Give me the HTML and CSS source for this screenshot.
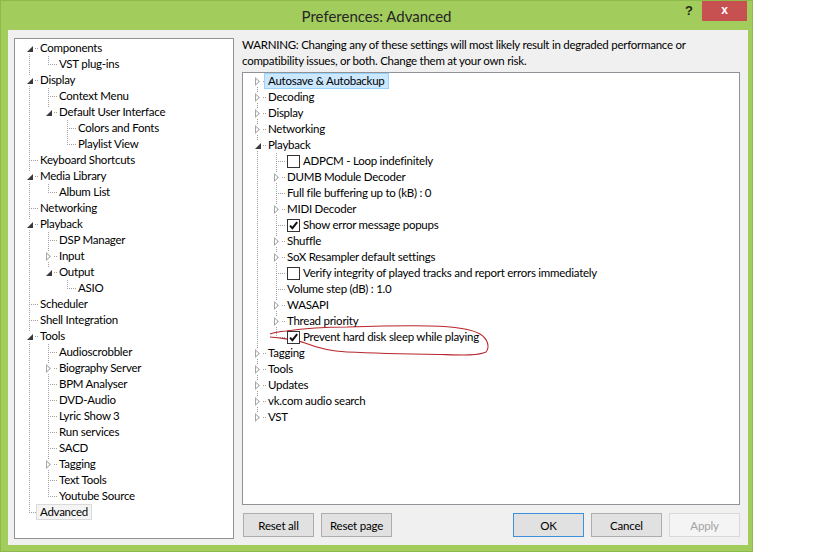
FILE: index.html
```html
<!DOCTYPE html>
<html>
<head>
<meta charset="utf-8">
<title>Preferences: Advanced</title>
<link rel="stylesheet" href="styles.css">
</head>
<body>
<div class="win">
  <div class="titlebar">
    <span></span>
    <span class="title">Preferences: Advanced</span>
    <span class="ctrls"><span class="help">?</span><span class="close">x</span></span>
  </div>
  <div class="client">
    <div class="tree tleft">
      <div class="row"><i class="c first"><b class="ex open"></b></i><span class="lb">Components</span></div>
      <div class="row"><i class="c pipe"></i><i class="c elbow"></i><span class="lb">VST plug-ins</span></div>
      <div class="row"><i class="c tee"><b class="ex open"></b></i><span class="lb">Display</span></div>
      <div class="row"><i class="c pipe"></i><i class="c tee"></i><span class="lb">Context Menu</span></div>
      <div class="row"><i class="c pipe"></i><i class="c elbow"><b class="ex open"></b></i><span class="lb">Default User Interface</span></div>
      <div class="row"><i class="c pipe"></i><i class="c"></i><i class="c tee"></i><span class="lb">Colors and Fonts</span></div>
      <div class="row"><i class="c pipe"></i><i class="c"></i><i class="c elbow"></i><span class="lb">Playlist View</span></div>
      <div class="row"><i class="c tee"></i><span class="lb">Keyboard Shortcuts</span></div>
      <div class="row"><i class="c tee"><b class="ex open"></b></i><span class="lb">Media Library</span></div>
      <div class="row"><i class="c pipe"></i><i class="c elbow"></i><span class="lb">Album List</span></div>
      <div class="row"><i class="c tee"></i><span class="lb">Networking</span></div>
      <div class="row"><i class="c tee"><b class="ex open"></b></i><span class="lb">Playback</span></div>
      <div class="row"><i class="c pipe"></i><i class="c tee"></i><span class="lb">DSP Manager</span></div>
      <div class="row"><i class="c pipe"></i><i class="c tee"><b class="ex closed"></b></i><span class="lb">Input</span></div>
      <div class="row"><i class="c pipe"></i><i class="c elbow"><b class="ex open"></b></i><span class="lb">Output</span></div>
      <div class="row"><i class="c pipe"></i><i class="c"></i><i class="c elbow"></i><span class="lb">ASIO</span></div>
      <div class="row"><i class="c tee"></i><span class="lb">Scheduler</span></div>
      <div class="row"><i class="c tee"></i><span class="lb">Shell Integration</span></div>
      <div class="row"><i class="c tee"><b class="ex open"></b></i><span class="lb">Tools</span></div>
      <div class="row"><i class="c pipe"></i><i class="c tee"></i><span class="lb">Audioscrobbler</span></div>
      <div class="row"><i class="c pipe"></i><i class="c tee"><b class="ex closed"></b></i><span class="lb">Biography Server</span></div>
      <div class="row"><i class="c pipe"></i><i class="c tee"></i><span class="lb">BPM Analyser</span></div>
      <div class="row"><i class="c pipe"></i><i class="c tee"></i><span class="lb">DVD-Audio</span></div>
      <div class="row"><i class="c pipe"></i><i class="c tee"></i><span class="lb">Lyric Show 3</span></div>
      <div class="row"><i class="c pipe"></i><i class="c tee"></i><span class="lb">Run services</span></div>
      <div class="row"><i class="c pipe"></i><i class="c tee"></i><span class="lb">SACD</span></div>
      <div class="row"><i class="c pipe"></i><i class="c tee"><b class="ex closed"></b></i><span class="lb">Tagging</span></div>
      <div class="row"><i class="c pipe"></i><i class="c tee"></i><span class="lb">Text Tools</span></div>
      <div class="row"><i class="c pipe"></i><i class="c elbow"></i><span class="lb">Youtube Source</span></div>
      <div class="row"><i class="c elbow"></i><span class="lb sel-gray">Advanced</span></div>
    </div>
    <div class="main">
      <p class="warn">WARNING: Changing any of these settings will most likely result in degraded performance or compatibility issues, or both. Change them at your own risk.</p>
      <div class="tree tright">
        <div class="row"><i class="c first"><b class="ex closed"></b></i><span class="lb sel-blue">Autosave &amp; Autobackup</span></div>
        <div class="row"><i class="c tee"><b class="ex closed"></b></i><span class="lb">Decoding</span></div>
        <div class="row"><i class="c tee"><b class="ex closed"></b></i><span class="lb">Display</span></div>
        <div class="row"><i class="c tee"><b class="ex closed"></b></i><span class="lb">Networking</span></div>
        <div class="row"><i class="c tee"><b class="ex open"></b></i><span class="lb">Playback</span></div>
        <div class="row"><i class="c pipe"></i><i class="c tee"></i><span class="lb"><span class="cb"></span>ADPCM - Loop indefinitely</span></div>
        <div class="row"><i class="c pipe"></i><i class="c tee"><b class="ex closed"></b></i><span class="lb">DUMB Module Decoder</span></div>
        <div class="row"><i class="c pipe"></i><i class="c tee"></i><span class="lb">Full file buffering up to (kB) : 0</span></div>
        <div class="row"><i class="c pipe"></i><i class="c tee"><b class="ex closed"></b></i><span class="lb">MIDI Decoder</span></div>
        <div class="row"><i class="c pipe"></i><i class="c tee"></i><span class="lb"><span class="cb"><svg viewBox="0 0 11 11" width="11" height="11"><path d="M2 5.6 L4.4 8.2 L9.2 2.2" fill="none" stroke="#111" stroke-width="2"/></svg></span>Show error message popups</span></div>
        <div class="row"><i class="c pipe"></i><i class="c tee"><b class="ex closed"></b></i><span class="lb">Shuffle</span></div>
        <div class="row"><i class="c pipe"></i><i class="c tee"><b class="ex closed"></b></i><span class="lb">SoX Resampler default settings</span></div>
        <div class="row"><i class="c pipe"></i><i class="c tee"></i><span class="lb"><span class="cb"></span>Verify integrity of played tracks and report errors immediately</span></div>
        <div class="row"><i class="c pipe"></i><i class="c tee"></i><span class="lb">Volume step (dB) : 1.0</span></div>
        <div class="row"><i class="c pipe"></i><i class="c tee"><b class="ex closed"></b></i><span class="lb">WASAPI</span></div>
        <div class="row"><i class="c pipe"></i><i class="c tee"><b class="ex closed"></b></i><span class="lb">Thread priority</span></div>
        <div class="row"><i class="c pipe"></i><i class="c elbow"></i><span class="lb"><span class="cb"><svg viewBox="0 0 11 11" width="11" height="11"><path d="M2 5.6 L4.4 8.2 L9.2 2.2" fill="none" stroke="#111" stroke-width="2"/></svg></span>Prevent hard disk sleep while playing</span></div>
        <div class="row"><i class="c tee"><b class="ex closed"></b></i><span class="lb">Tagging</span></div>
        <div class="row"><i class="c tee"><b class="ex closed"></b></i><span class="lb">Tools</span></div>
        <div class="row"><i class="c tee"><b class="ex closed"></b></i><span class="lb">Updates</span></div>
        <div class="row"><i class="c tee"><b class="ex closed"></b></i><span class="lb">vk.com audio search</span></div>
        <div class="row"><i class="c elbow"><b class="ex closed"></b></i><span class="lb">VST</span></div>
      </div>
      <div class="buttons">
        <div class="btn-group">
          <button class="btn">Reset all</button>
          <button class="btn">Reset page</button>
        </div>
        <div class="btn-group">
          <button class="btn default">OK</button>
          <button class="btn">Cancel</button>
          <button class="btn disabled">Apply</button>
        </div>
      </div>
    </div>
  </div>
</div>
<svg class="scribble" width="819" height="553" viewBox="0 0 819 553">
  <path d="M270,334 C276,332 281,331.5 286,331 C300,329 320,327 347,327 C380,326 410,325.5 430,326 C450,326.5 470,328 480,334 C488,339 490,347 486,352 C478,356 460,355 440,354.5 C410,354 380,353.5 347,352 C330,351 315,347 305,343 C296,340 287,339 280,338 L270,337" fill="none" stroke="#b8262b" stroke-width="1.1"/>
</svg>
</body>
</html>
```

FILE: styles.css
```css
html, body {
  margin: 0;
  padding: 0;
  background: #ffffff;
}
body {
  width: 819px;
  height: 553px;
  position: relative;
  overflow: hidden;
  font-family: Lato, "Liberation Sans", sans-serif;
  font-size: 11.5px;
  letter-spacing: -0.25px;
  color: #000;
}
.win {
  width: 753px;
  height: 552px;
  box-sizing: border-box;
  background: #a2cc5c;
  border: 1px solid #8dba4a;
  display: flex;
  flex-direction: column;
}
.titlebar {
  height: 29px;
  display: grid;
  grid-template-columns: 1fr auto 1fr;
  align-items: start;
}
.title {
  font-size: 15px;
  letter-spacing: 0;
  color: #262626;
  line-height: 29px;
  padding-top: 1px;
}
.ctrls {
  justify-self: end;
  display: flex;
  margin-right: 5px;
}
.help {
  width: 26px;
  height: 20px;
  text-align: center;
  font-family: "Liberation Sans", sans-serif;
  font-weight: bold;
  font-size: 13px;
  letter-spacing: 0;
  line-height: 20px;
  color: #1f2a14;
}
.close {
  width: 45px;
  height: 20px;
  background: #c75050;
  color: #fff;
  text-align: center;
  font-family: "Liberation Sans", sans-serif;
  font-weight: bold;
  font-size: 12px;
  letter-spacing: 0;
  line-height: 19px;
}
.client {
  flex: 1;
  margin: 0 4px 6px 7px;
  background: #f0f0f0;
  padding: 8px 8px 6px 6px;
  display: grid;
  grid-template-columns: 220px 1fr;
  column-gap: 8px;
  min-height: 0;
}
.tree {
  background: #fff;
  border: 1px solid #8f9296;
  box-sizing: border-box;
  overflow: hidden;
}
.tleft {
  padding: 1px 0 0 6px;
}
.tright {
  padding: 0 0 0 6px;
  flex: 1;
}
.main {
  display: flex;
  flex-direction: column;
  min-height: 0;
  padding-bottom: 2px;
}
.warn {
  margin: -1px 0 3px;
  line-height: 16px;
}
.row {
  display: flex;
  align-items: center;
  height: 16px;
  white-space: nowrap;
}
.c {
  position: relative;
  flex: none;
  width: 19px;
  height: 16px;
}
.c.pipe::before,
.c.tee::before,
.c.elbow::before,
.c.first::before {
  content: "";
  position: absolute;
  left: 8px;
  top: 0;
  width: 1px;
  height: 16px;
  background: repeating-linear-gradient(to bottom, #a0a0a0 0 1px, transparent 1px 2px);
}
.c.elbow::before {
  height: 9px;
}
.c.first::before {
  top: 8px;
  height: 8px;
}
.c.tee::after,
.c.elbow::after,
.c.first::after {
  content: "";
  position: absolute;
  left: 8px;
  top: 8px;
  width: 10px;
  height: 1px;
  background: repeating-linear-gradient(to right, #a0a0a0 0 1px, transparent 1px 2px);
}
.ex {
  position: absolute;
  left: 4px;
  top: 3px;
  width: 9px;
  height: 11px;
  background: #fff;
  z-index: 1;
}
.ex.open::before {
  content: "";
  position: absolute;
  left: 2px;
  top: 3px;
  width: 6px;
  height: 6px;
  background: #3a3a3a;
  clip-path: polygon(100% 0, 100% 100%, 0 100%);
}
.ex.closed::before {
  content: "";
  position: absolute;
  left: 2px;
  top: 1px;
  width: 5px;
  height: 9px;
  background: #a6a6a6;
  clip-path: polygon(0 0, 100% 50%, 0 100%);
}
.ex.closed::after {
  content: "";
  position: absolute;
  left: 3px;
  top: 3px;
  width: 2.5px;
  height: 5px;
  background: #fff;
  clip-path: polygon(0 0, 100% 50%, 0 100%);
}
.lb {
  display: flex;
  align-items: center;
  box-sizing: border-box;
  margin-left: -4px;
  padding: 0 3px 1px;
  height: 16px;
  border: 1px solid transparent;
  position: relative;
  z-index: 2;
}
.sel-blue {
  background: #cce8ff;
  border-color: #99d1ff;
}
.sel-gray {
  background: #f4f4f4;
  border-color: #dadada;
}
.cb {
  width: 13px;
  height: 13px;
  box-sizing: border-box;
  border: 1px solid #333;
  background: #fff;
  margin-right: 3px;
  margin-top: 1px;
  display: flex;
  align-items: center;
  justify-content: center;
  flex: none;
}
.cb svg {
  display: block;
}
.buttons {
  display: flex;
  justify-content: space-between;
  margin-top: 8px;
  height: 24px;
}
.btn-group {
  display: flex;
  gap: 7px;
}
.btn-group:first-child {
  margin-left: 1px;
}
.btn {
  width: 71px;
  height: 24px;
  margin: 0;
  padding: 0;
  font-family: Lato, "Liberation Sans", sans-serif;
  font-size: 11.5px;
  letter-spacing: -0.2px;
  color: #000;
  background: #e1e1e1;
  border: 1px solid #adadad;
  border-radius: 0;
}
.btn.default {
  border-color: #3c8fd8;
}
.btn.disabled {
  background: #f4f4f4;
  border-color: #d9d9d9;
  color: #a3a3a3;
}
.scribble {
  position: absolute;
  left: 0;
  top: 0;
  pointer-events: none;
}
```
